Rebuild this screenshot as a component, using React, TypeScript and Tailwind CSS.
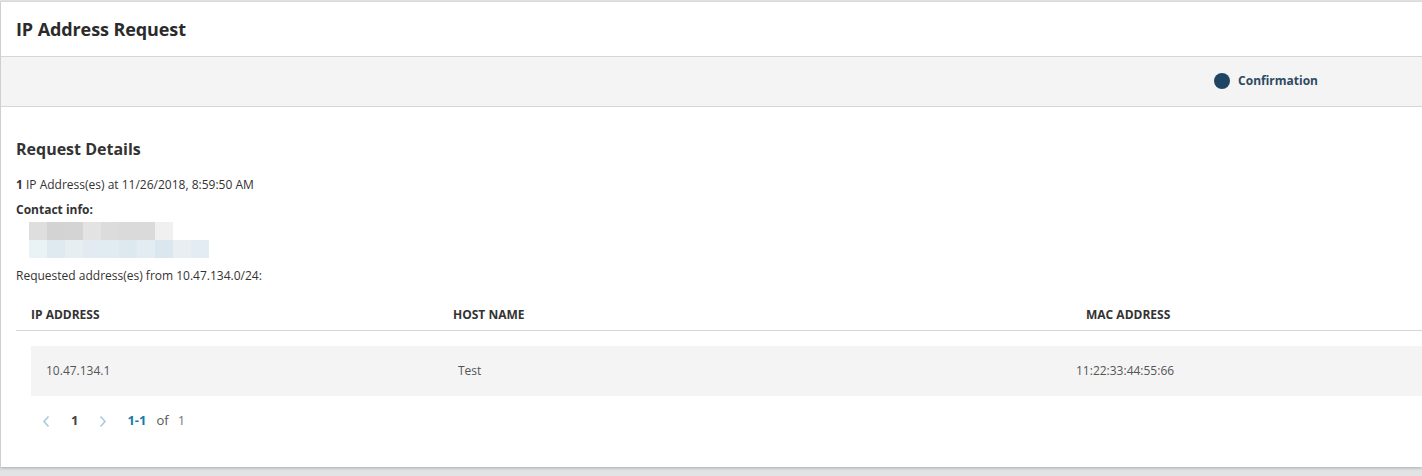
import React from "react";

const greyBlocks = ["#dedede", "#d3d3d3", "#d4d4d4", "#e3e3e3", "#dcdcdc", "#dadada", "#dadada", "#f0f0f0"];
const blueBlocks = ["#e9f2f5", "#dfeaf0", "#e6eef2", "#e2ebf1", "#e0ecf2", "#dee9ef", "#e3ecf2", "#dbe7ee", "#e8eef2", "#e3ecf3"];

export default function App() {
  return (
    <div className="min-h-[476px] bg-[#e2e3e4] pt-[2px] font-['Open_Sans',sans-serif] text-[#333]">
      <div className="h-[465px] bg-white border-l border-[#cfcfcf] shadow-[0_1px_3px_rgba(0,0,0,0.25)]">
        {/* header */}
        <div className="h-[55px] flex items-center px-[15px] border-b border-[#d6d6d6]">
          <h1 className="text-[18px] font-bold text-[#2b2b2b] tracking-[-0.1px]">IP Address Request</h1>
        </div>

        {/* stepper */}
        <div className="h-[50px] pb-[2px] bg-[#f4f4f4] border-b border-[#d6d6d6] flex items-center justify-end pr-[104px]">
          <div className="flex items-center gap-[8px]">
            <span className="w-4 h-4 rounded-full bg-[#1f4564]" />
            <span className="text-[12px] font-bold text-[#2d4a62]">Confirmation</span>
          </div>
        </div>

        {/* details */}
        <div className="pl-[15px]">
          <h2 className="pt-[31px] text-[16px] font-bold text-[#333] leading-[22px]">Request Details</h2>
          <p className="mt-[17px] text-[12px] leading-[16px] text-[#333]">
            <span className="font-bold">1</span> IP Address(es) at 11/26/2018, 8:59:50 AM
          </p>
          <p className="mt-[9px] text-[12px] leading-[16px] font-bold text-[#333]">Contact info:</p>
          <div className="mt-[4px] ml-[13px] flex flex-col">
            <div className="flex">
              {greyBlocks.map((c, i) => (
                <span key={i} className="w-[18px] h-[18px]" style={{ backgroundColor: c }} />
              ))}
            </div>
            <div className="flex">
              {blueBlocks.map((c, i) => (
                <span key={i} className="w-[18px] h-[18px]" style={{ backgroundColor: c }} />
              ))}
            </div>
          </div>
          <p className="mt-[10px] text-[12px] leading-[16px] text-[#333]">Requested address(es) from 10.47.134.0/24:</p>

          {/* table */}
          <div className="mt-[15px]">
            <div className="flex h-[32px] items-center border-b border-[#d6d6d6] text-[12px] font-bold text-[#333]">
              <span className="w-[437px] pl-[15px]">IP ADDRESS</span>
              <span className="w-[633px]">HOST NAME</span>
              <span>MAC ADDRESS</span>
            </div>
            <div className="mt-[15px] ml-[15px] h-[50px] bg-[#f4f4f4] flex items-center text-[12px] text-[#555]">
              <span className="w-[427px] pl-[15px]">10.47.134.1</span>
              <span className="w-[618px]">Test</span>
              <span>11:22:33:44:55:66</span>
            </div>
          </div>

          {/* pagination */}
          <div className="mt-[15px] ml-[25px] flex items-center h-[20px] text-[13px]">
            <svg width="10" height="13" viewBox="0 0 10 13" className="mr-[20px]">
              <path d="M7.5 1.5 L3 6.5 L7.5 11.5" fill="none" stroke="#a9cbdc" strokeWidth="1.6" />
            </svg>
            <span className="font-bold text-[#444]">1</span>
            <svg width="10" height="13" viewBox="0 0 10 13" className="ml-[20px] mr-[19px]">
              <path d="M2.5 1.5 L7 6.5 L2.5 11.5" fill="none" stroke="#a9cbdc" strokeWidth="1.6" />
            </svg>
            <span className="font-bold text-[#1b7aa9]">1-1</span>
            <span className="ml-[10px] text-[#555]">of</span>
            <span className="ml-[9px] text-[#777]">1</span>
          </div>
        </div>
      </div>
    </div>
  );
}
